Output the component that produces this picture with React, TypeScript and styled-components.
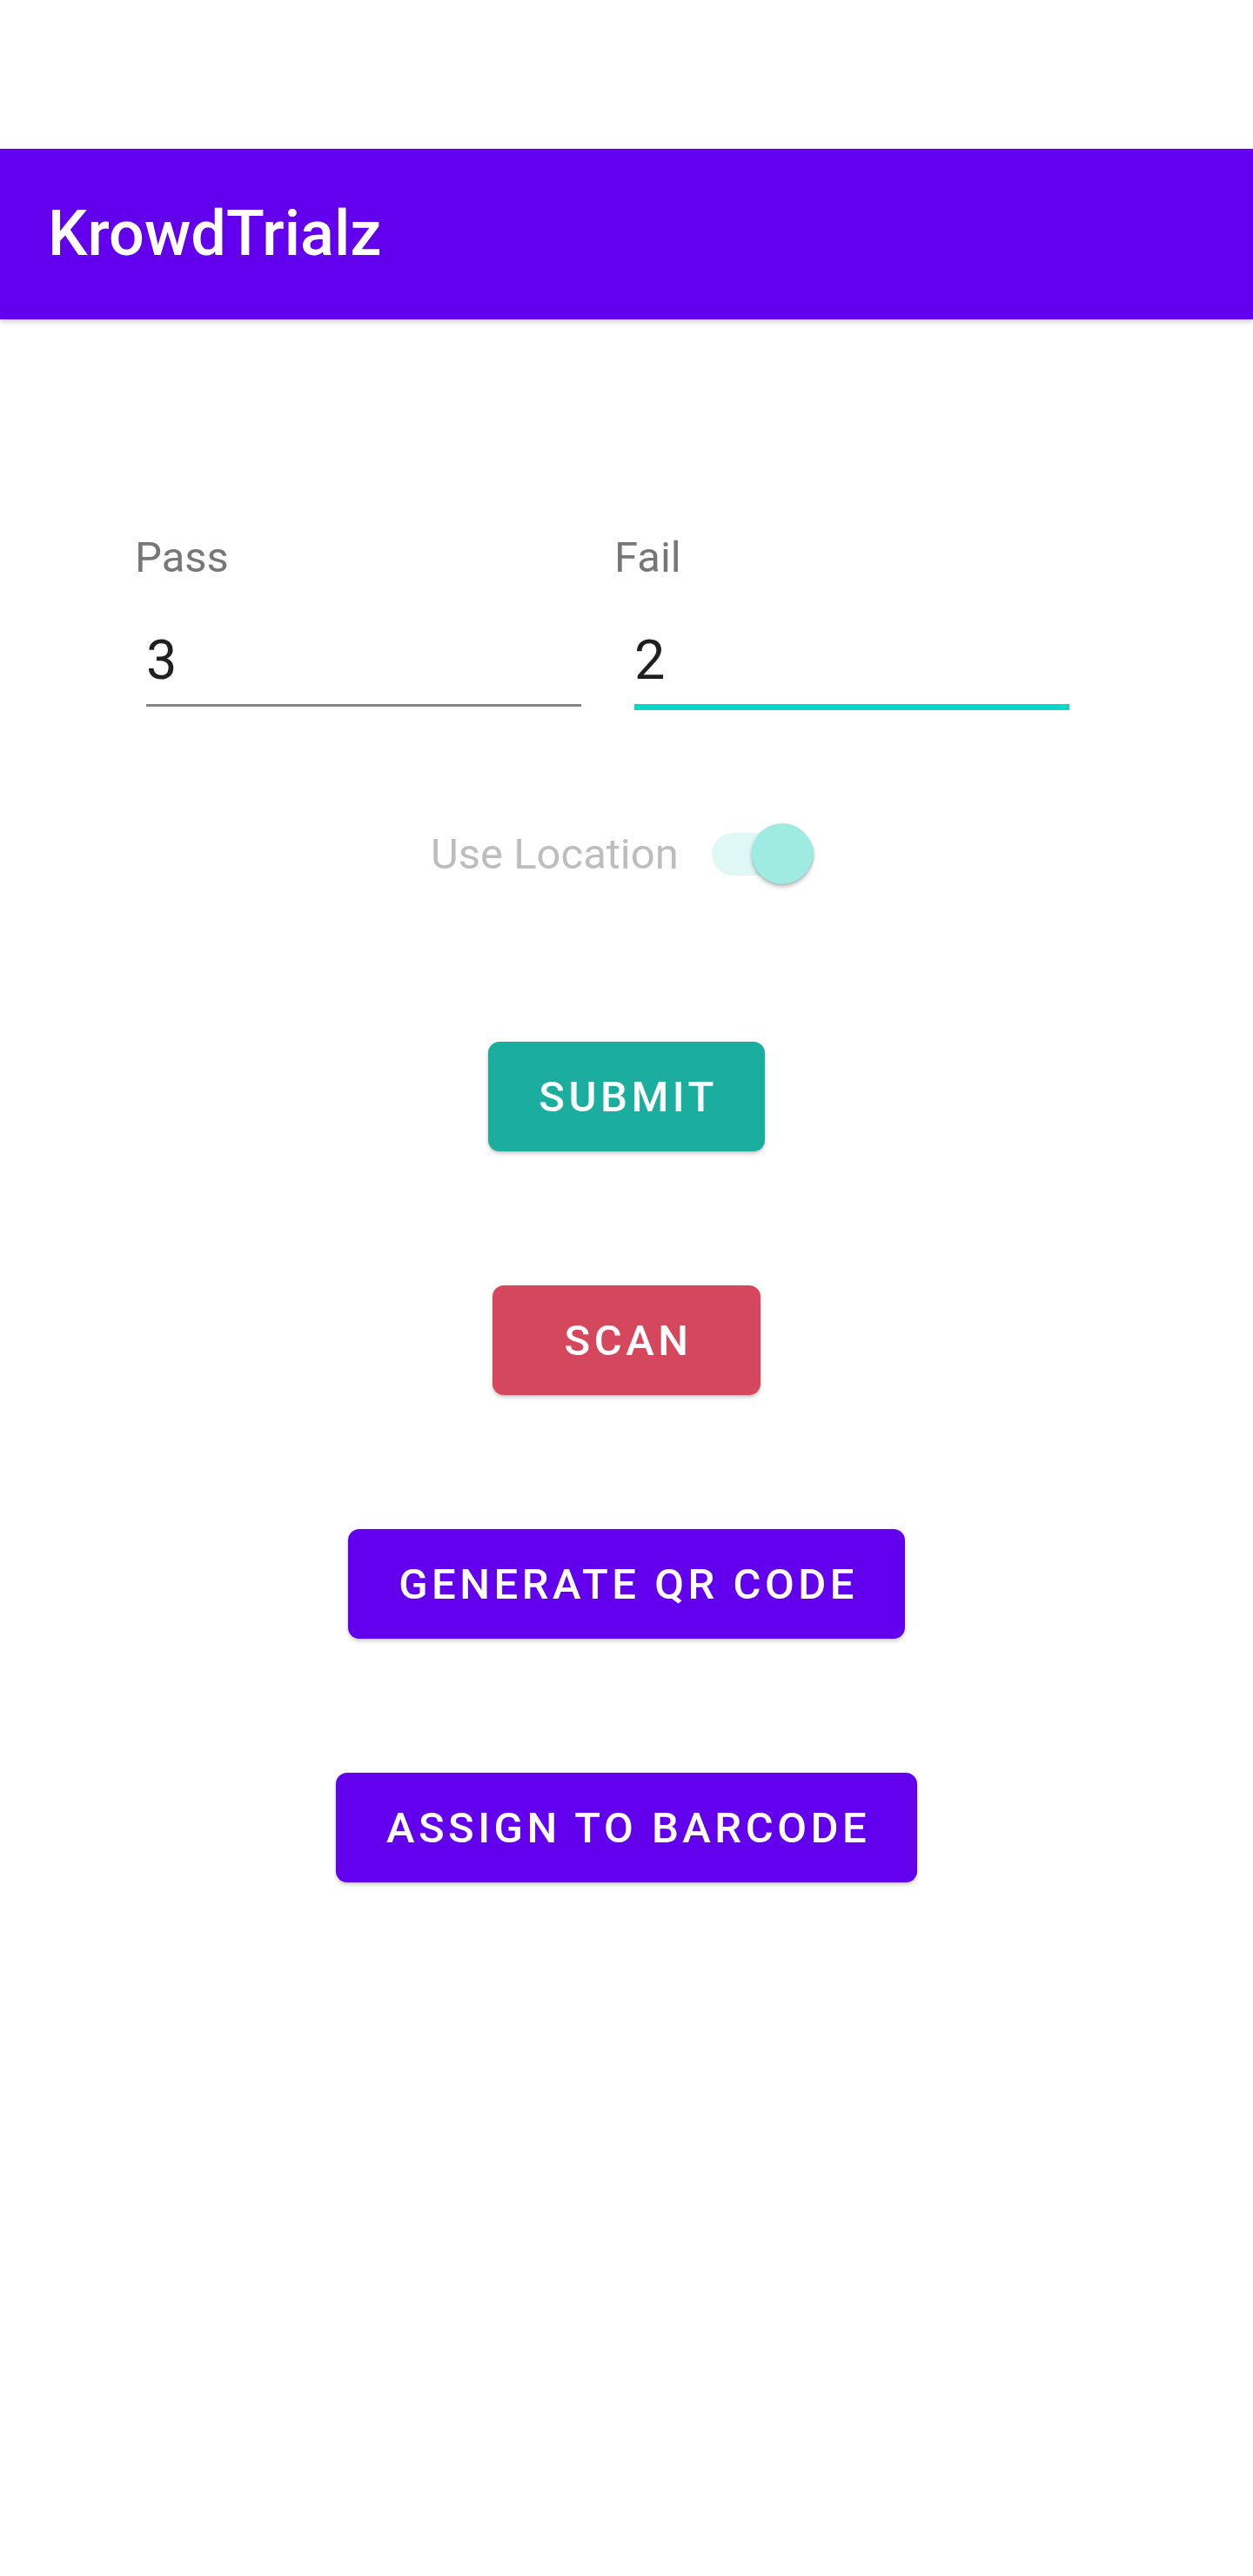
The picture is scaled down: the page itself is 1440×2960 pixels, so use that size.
import React from "react";
import styled, { createGlobalStyle } from "styled-components";

const GlobalStyle = createGlobalStyle`
  html, body {
    margin: 0;
    padding: 0;
    background: #ffffff;
  }
  body {
    font-family: Roboto, "Noto Sans", "Liberation Sans", sans-serif;
    -webkit-font-smoothing: antialiased;
  }
  * { box-sizing: border-box; }
`;

const Screen = styled.div`
  width: 1440px;
  min-height: 2960px;
  background: #ffffff;
  display: flex;
  flex-direction: column;
`;

const StatusArea = styled.div`
  height: 171px;
  background: #ffffff;
`;

const AppBar = styled.header`
  height: 196px;
  background: #6200ee;
  display: flex;
  align-items: center;
  padding-left: 55px;
  box-shadow: 0 2px 4px rgba(0, 0, 0, 0.14), 0 4px 8px rgba(0, 0, 0, 0.08);
  position: relative;
  z-index: 1;
`;

const Title = styled.h1`
  margin: 0;
  font-family: Roboto, sans-serif;
  font-weight: 500;
  font-size: 72px;
  line-height: 1;
  color: #ffffff;
`;

const Content = styled.main`
  display: flex;
  flex-direction: column;
`;

const LabelRow = styled.div`
  margin-top: 249px;
  padding-left: 155px;
  display: grid;
  grid-template-columns: 551px auto;
`;

const Label = styled.span`
  font-size: 49px;
  line-height: 49px;
  color: #777777;
`;

const FieldRow = styled.div`
  margin-top: 62px;
  padding-left: 168px;
  display: flex;
  align-items: flex-start;
  gap: 61px;
`;

const Field = styled.div<{ $focused?: boolean }>`
  width: 500px;
  font-size: 63px;
  line-height: 63px;
  color: #1f1f1f;
  padding-bottom: 19px;
  border-bottom: ${(p) => (p.$focused ? "7px solid #03dac5" : "3px solid #858585")};
`;

const ToggleRow = styled.div`
  margin-top: 130px;
  height: 70px;
  padding-left: 495px;
  display: flex;
  align-items: center;
  gap: 38px;
`;

const ToggleLabel = styled.span`
  font-size: 49px;
  line-height: 49px;
  color: #bdbdbd;
`;

const Switch = styled.div`
  position: relative;
  width: 119px;
  height: 70px;
  display: flex;
  align-items: center;
`;

const Track = styled.div`
  width: 119px;
  height: 49px;
  border-radius: 25px;
  background: #e0f8f5;
`;

const Thumb = styled.div`
  position: absolute;
  right: 3px;
  top: 0;
  width: 70px;
  height: 70px;
  border-radius: 50%;
  background: #9eebe1;
  box-shadow: 0 3px 5px rgba(0, 0, 0, 0.25), 0 1px 2px rgba(0, 0, 0, 0.12);
`;

const ButtonStack = styled.div`
  margin-top: 181px;
  display: flex;
  flex-direction: column;
  align-items: center;
  gap: 154px;
`;

const ActionButton = styled.button<{ $bg: string }>`
  min-width: 308px;
  height: 126px;
  padding: 0 54px 0 58px;
  border: none;
  border-radius: 13px;
  background: ${(p) => p.$bg};
  color: #ffffff;
  font-family: Roboto, sans-serif;
  font-weight: 500;
  font-size: 49px;
  letter-spacing: 4.5px;
  line-height: 1;
  display: flex;
  align-items: center;
  justify-content: center;
  box-shadow: 0 3px 4px rgba(0, 0, 0, 0.16), 0 1px 3px rgba(0, 0, 0, 0.1);
  cursor: pointer;
`;

export default function App() {
  return (
    <>
      <GlobalStyle />
      <Screen>
        <StatusArea />
        <AppBar>
          <Title>KrowdTrialz</Title>
        </AppBar>
        <Content>
          <LabelRow>
            <Label>Pass</Label>
            <Label>Fail</Label>
          </LabelRow>
          <FieldRow>
            <Field>3</Field>
            <Field $focused>2</Field>
          </FieldRow>
          <ToggleRow>
            <ToggleLabel>Use Location</ToggleLabel>
            <Switch>
              <Track />
              <Thumb />
            </Switch>
          </ToggleRow>
          <ButtonStack>
            <ActionButton $bg="#1bae9f">SUBMIT</ActionButton>
            <ActionButton $bg="#d4475c">SCAN</ActionButton>
            <ActionButton $bg="#6200ee">GENERATE QR CODE</ActionButton>
            <ActionButton $bg="#6200ee">ASSIGN TO BARCODE</ActionButton>
          </ButtonStack>
        </Content>
      </Screen>
    </>
  );
}
